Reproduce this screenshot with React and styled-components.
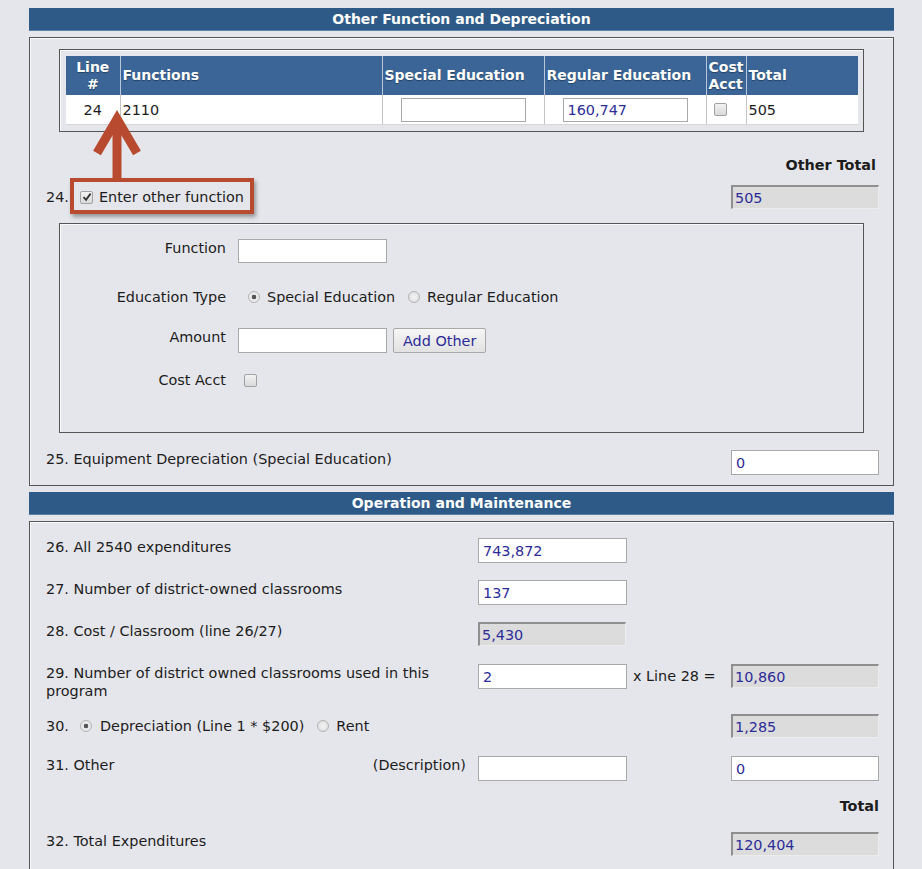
import React from "react";
import styled, { createGlobalStyle } from "styled-components";

const Global = createGlobalStyle`
  html, body { margin: 0; padding: 0; }
  body {
    background: #e5e6eb;
    font-family: "DejaVu Sans", Verdana, sans-serif;
    font-size: 14.4px;
    line-height: 18px;
    color: #1c1c1c;
  }
`;

const Page = styled.div`
  width: 865px;
  padding: 8px 0 40px 29px;
`;

const SectionBar = styled.div`
  height: 23px;
  background: #2e5a87;
  color: #fff;
  font-weight: bold;
  font-size: 14px;
  line-height: 23px;
  text-align: center;
  box-shadow: inset 0 -1px 0 #5c82aa;
  margin-top: ${(p) => p.$mt || 0}px;
`;

const Panel = styled.div`
  position: relative;
  margin-top: 6px;
  border: 1px solid #555;
  box-shadow: inset 1px 1px 0 #fafafa;
  padding: ${(p) => p.$pad};
`;

const TableFrame = styled.div`
  margin: 0 15px 0 13px;
  border: 1px solid #555;
  box-shadow: inset 1px 1px 0 #fafafa;
  padding: 6px 5px 6px 6px;
`;

const FuncTable = styled.table`
  width: 100%;
  border-collapse: collapse;
  table-layout: fixed;
`;

const Th = styled.th`
  background: #3a6596;
  color: #fff;
  font-weight: bold;
  font-size: 14px;
  line-height: 17px;
  height: 39px;
  padding: 0 2px;
  text-align: ${(p) => (p.$center ? "center" : "left")};
  border-left: 1px solid #b9c7d8;
  text-shadow: 0 1px 1px rgba(0, 0, 0, 0.35);
  &:first-child { border-left: none; }
`;

const Td = styled.td`
  background: #fff;
  height: 29px;
  padding: 0 2px;
  text-align: ${(p) => p.$align || "left"};
  border-left: 1px solid #c4c4c4;
  border-bottom: 1px solid #d6d6d6;
  vertical-align: middle;
  &:first-child { border-left: none; }
`;

const TextBox = styled.input`
  box-sizing: border-box;
  width: ${(p) => p.$w || 149}px;
  height: ${(p) => p.$h || 25}px;
  margin: 0;
  padding: 0 0 0 4px;
  font-family: "DejaVu Sans", Verdana, sans-serif;
  font-size: 14.4px;
  color: #2c2c98;
  background: #fff;
  border: 1px solid #a9a9a9;
  border-radius: 0;
  outline: none;
  display: block;
`;

const ReadBox = styled(TextBox)`
  width: 148px;
  height: 24px;
  padding-left: 2px;
  background: #dcdcdc;
  border-top: 2px solid #8f8f8f;
  border-left: 2px solid #8f8f8f;
  border-right: 1px solid #ececec;
  border-bottom: 1px solid #ececec;
`;

const CheckBox = styled.span`
  display: inline-block;
  box-sizing: border-box;
  width: 13px;
  height: 13px;
  border: 1px solid #a2a2a2;
  border-radius: 2px;
  background: linear-gradient(#f3f3f3, #d9d9d9);
  position: relative;
  flex: none;
  svg { position: absolute; left: 1px; top: 0px; }
`;

const Radio = styled.span`
  display: inline-block;
  box-sizing: border-box;
  width: 12px;
  height: 12px;
  border: 1px solid #b3b3b3;
  border-radius: 50%;
  background: radial-gradient(circle, ${(p) => (p.$on ? "#555 0 2px, #eaeaea 2.6px" : "#f4f4f4 0, #dedede 6px")});
  flex: none;
`;

const Check = ({ on }) => (
  <CheckBox>
    {on && (
      <svg width="10" height="10" viewBox="0 0 10 10">
        <path d="M1.5 5.2 L4 7.8 L8.6 1.6" fill="none" stroke="#333" strokeWidth="1.8" />
      </svg>
    )}
  </CheckBox>
);

const RightTitle = styled.div`
  text-align: right;
  font-weight: bold;
  font-size: 14.4px;
  padding-right: ${(p) => p.$pr || 0}px;
  margin-top: ${(p) => p.$mt || 0}px;
`;

const LineRow = styled.div`
  display: flex;
  align-items: ${(p) => (p.$center ? "center" : "flex-start")};
  justify-content: space-between;
  margin-top: ${(p) => p.$mt || 0}px;
`;

const Inline = styled.div`
  display: flex;
  align-items: center;
`;

const Num = styled.span`
  width: 34px;
`;

const ChoiceText = styled.span`
  margin-left: ${(p) => p.$ml || 6}px;
  margin-right: ${(p) => p.$mr || 0}px;
`;

const SubBox = styled.div`
  margin: 14px 15px 0 13px;
  border: 1px solid #555;
  box-shadow: inset 1px 1px 0 #fafafa;
  padding: 15px 0 43px 0;
`;

const SubRow = styled.div`
  display: grid;
  grid-template-columns: 166px 1fr;
  column-gap: 12px;
  align-items: start;
  margin-top: ${(p) => p.$mt || 0}px;
`;

const SubLabel = styled.div`
  text-align: right;
`;

const Fields = styled.div`
  display: flex;
  align-items: center;
  padding-left: ${(p) => p.$pl || 0}px;
  min-height: 18px;
`;

const Button = styled.button`
  margin-left: 6px;
  height: 25px;
  padding: 0 9px;
  font-family: "DejaVu Sans", Verdana, sans-serif;
  font-size: 14.4px;
  color: #2c2c98;
  background: linear-gradient(#f6f6f6, #e2e2e2);
  border: 1px solid #a9a9a9;
  border-radius: 2px;
`;

const Rows = styled.div`
  display: flex;
  flex-direction: column;
`;

const GridRow = styled.div`
  display: grid;
  grid-template-columns: 432px 149px 104px 148px;
  align-items: ${(p) => (p.$center ? "center" : "start")};
  margin-top: ${(p) => p.$mt || 0}px;
`;

const RowLabel = styled.div`
  display: flex;
  justify-content: space-between;
  align-items: flex-start;
  padding-right: ${(p) => p.$pr || 0}px;
`;

const Times = styled.div`
  padding: 3px 0 0 6px;
`;

const Annotation = styled.div`
  position: absolute;
  left: 40px;
  top: 140px;
  width: 184px;
  height: 36px;
  box-sizing: border-box;
  border: 4px solid #b84a2f;
  box-shadow: 2px 3px 4px rgba(0, 0, 0, 0.35);
  pointer-events: none;
`;

const ArrowSvg = styled.svg`
  position: absolute;
  left: 0;
  top: 0;
  pointer-events: none;
`;

const Cell = styled.div`
  display: flex;
  justify-content: ${(p) => p.$justify || "center"};
  padding-left: ${(p) => p.$pl || 0}px;
`;

export default function App() {
  return (
    <>
      <Global />
      <Page>
        <SectionBar>Other Function and Depreciation</SectionBar>
        <Panel $pad="11px 14px 10px 16px">
          <TableFrame>
            <FuncTable>
              <colgroup>
                <col style={{ width: 54 }} />
                <col style={{ width: 262 }} />
                <col style={{ width: 162 }} />
                <col style={{ width: 162 }} />
                <col style={{ width: 40 }} />
                <col />
              </colgroup>
              <thead>
                <tr>
                  <Th $center>
                    Line
                    <br />#
                  </Th>
                  <Th>Functions</Th>
                  <Th>Special Education</Th>
                  <Th>Regular Education</Th>
                  <Th>
                    Cost
                    <br />
                    Acct
                  </Th>
                  <Th>Total</Th>
                </tr>
              </thead>
              <tbody>
                <tr>
                  <Td $align="center">24</Td>
                  <Td>2110</Td>
                  <Td>
                    <Cell>
                      <TextBox $w={125} $h={24} defaultValue="" />
                    </Cell>
                  </Td>
                  <Td>
                    <Cell>
                      <TextBox $w={125} $h={24} defaultValue="160,747" />
                    </Cell>
                  </Td>
                  <Td>
                    <Cell $justify="flex-start" $pl={5}>
                      <Check />
                    </Cell>
                  </Td>
                  <Td>505</Td>
                </tr>
              </tbody>
            </FuncTable>
          </TableFrame>

          <RightTitle $pr={3} $mt={24}>Other Total</RightTitle>

          <LineRow $center $mt={11}>
            <Inline>
              <Num>24.</Num>
              <Check on />
              <ChoiceText $ml={6}>Enter other function</ChoiceText>
            </Inline>
            <ReadBox readOnly value="505" />
          </LineRow>

          <SubBox>
            <SubRow>
              <SubLabel>Function</SubLabel>
              <Fields>
                <TextBox $h={24} defaultValue="" />
              </Fields>
            </SubRow>
            <SubRow $mt={25}>
              <SubLabel>Education Type</SubLabel>
              <Fields $pl={10}>
                <Radio $on />
                <ChoiceText $ml={7} $mr={13}>Special Education</ChoiceText>
                <Radio />
                <ChoiceText $ml={7}>Regular Education</ChoiceText>
              </Fields>
            </SubRow>
            <SubRow $mt={22}>
              <SubLabel>Amount</SubLabel>
              <Fields>
                <TextBox defaultValue="" />
                <Button>Add Other</Button>
              </Fields>
            </SubRow>
            <SubRow $mt={18}>
              <SubLabel>Cost Acct</SubLabel>
              <Fields $pl={6}>
                <Check />
              </Fields>
            </SubRow>
          </SubBox>

          <LineRow $mt={17}>
            <span>25. Equipment Depreciation (Special Education)</span>
            <TextBox $w={148} defaultValue="0" />
          </LineRow>

          <Annotation />
          <ArrowSvg width="140" height="150" viewBox="0 0 140 150">
            <path d="M87 141 L87 82" stroke="#b84a2f" strokeWidth="9" fill="none" />
            <path d="M67 115 L87 81 L107 115" stroke="#b84a2f" strokeWidth="9" fill="none" strokeLinejoin="miter" />
          </ArrowSvg>
        </Panel>

        <SectionBar $mt={6}>Operation and Maintenance</SectionBar>
        <Panel $pad="16px 14px 30px 16px">
          <Rows>
            <GridRow>
              <RowLabel>26. All 2540 expenditures</RowLabel>
              <TextBox defaultValue="743,872" />
            </GridRow>
            <GridRow $mt={17}>
              <RowLabel>27. Number of district-owned classrooms</RowLabel>
              <TextBox defaultValue="137" />
            </GridRow>
            <GridRow $mt={17}>
              <RowLabel>28. Cost / Classroom (line 26/27)</RowLabel>
              <ReadBox readOnly value="5,430" />
            </GridRow>
            <GridRow $mt={18}>
              <RowLabel>29. Number of district owned classrooms used in this program</RowLabel>
              <TextBox defaultValue="2" />
              <Times>x Line 28 =</Times>
              <ReadBox readOnly value="10,860" />
            </GridRow>
            <GridRow $center $mt={14}>
              <RowLabel>
                <Inline>
                  <Num>30.</Num>
                  <Radio $on />
                  <ChoiceText $ml={8} $mr={13}>Depreciation (Line 1 * $200)</ChoiceText>
                  <Radio />
                  <ChoiceText $ml={7}>Rent</ChoiceText>
                </Inline>
              </RowLabel>
              <span />
              <span />
              <ReadBox readOnly value="1,285" />
            </GridRow>
            <GridRow $mt={18}>
              <RowLabel $pr={12}>
                <span>31. Other</span>
                <span>(Description)</span>
              </RowLabel>
              <TextBox defaultValue="" />
              <span />
              <TextBox $w={148} defaultValue="0" />
            </GridRow>
            <RightTitle $mt={16}>Total</RightTitle>
            <GridRow $mt={17}>
              <RowLabel>32. Total Expenditures</RowLabel>
              <span />
              <span />
              <ReadBox readOnly value="120,404" />
            </GridRow>
          </Rows>
        </Panel>
      </Page>
    </>
  );
}
